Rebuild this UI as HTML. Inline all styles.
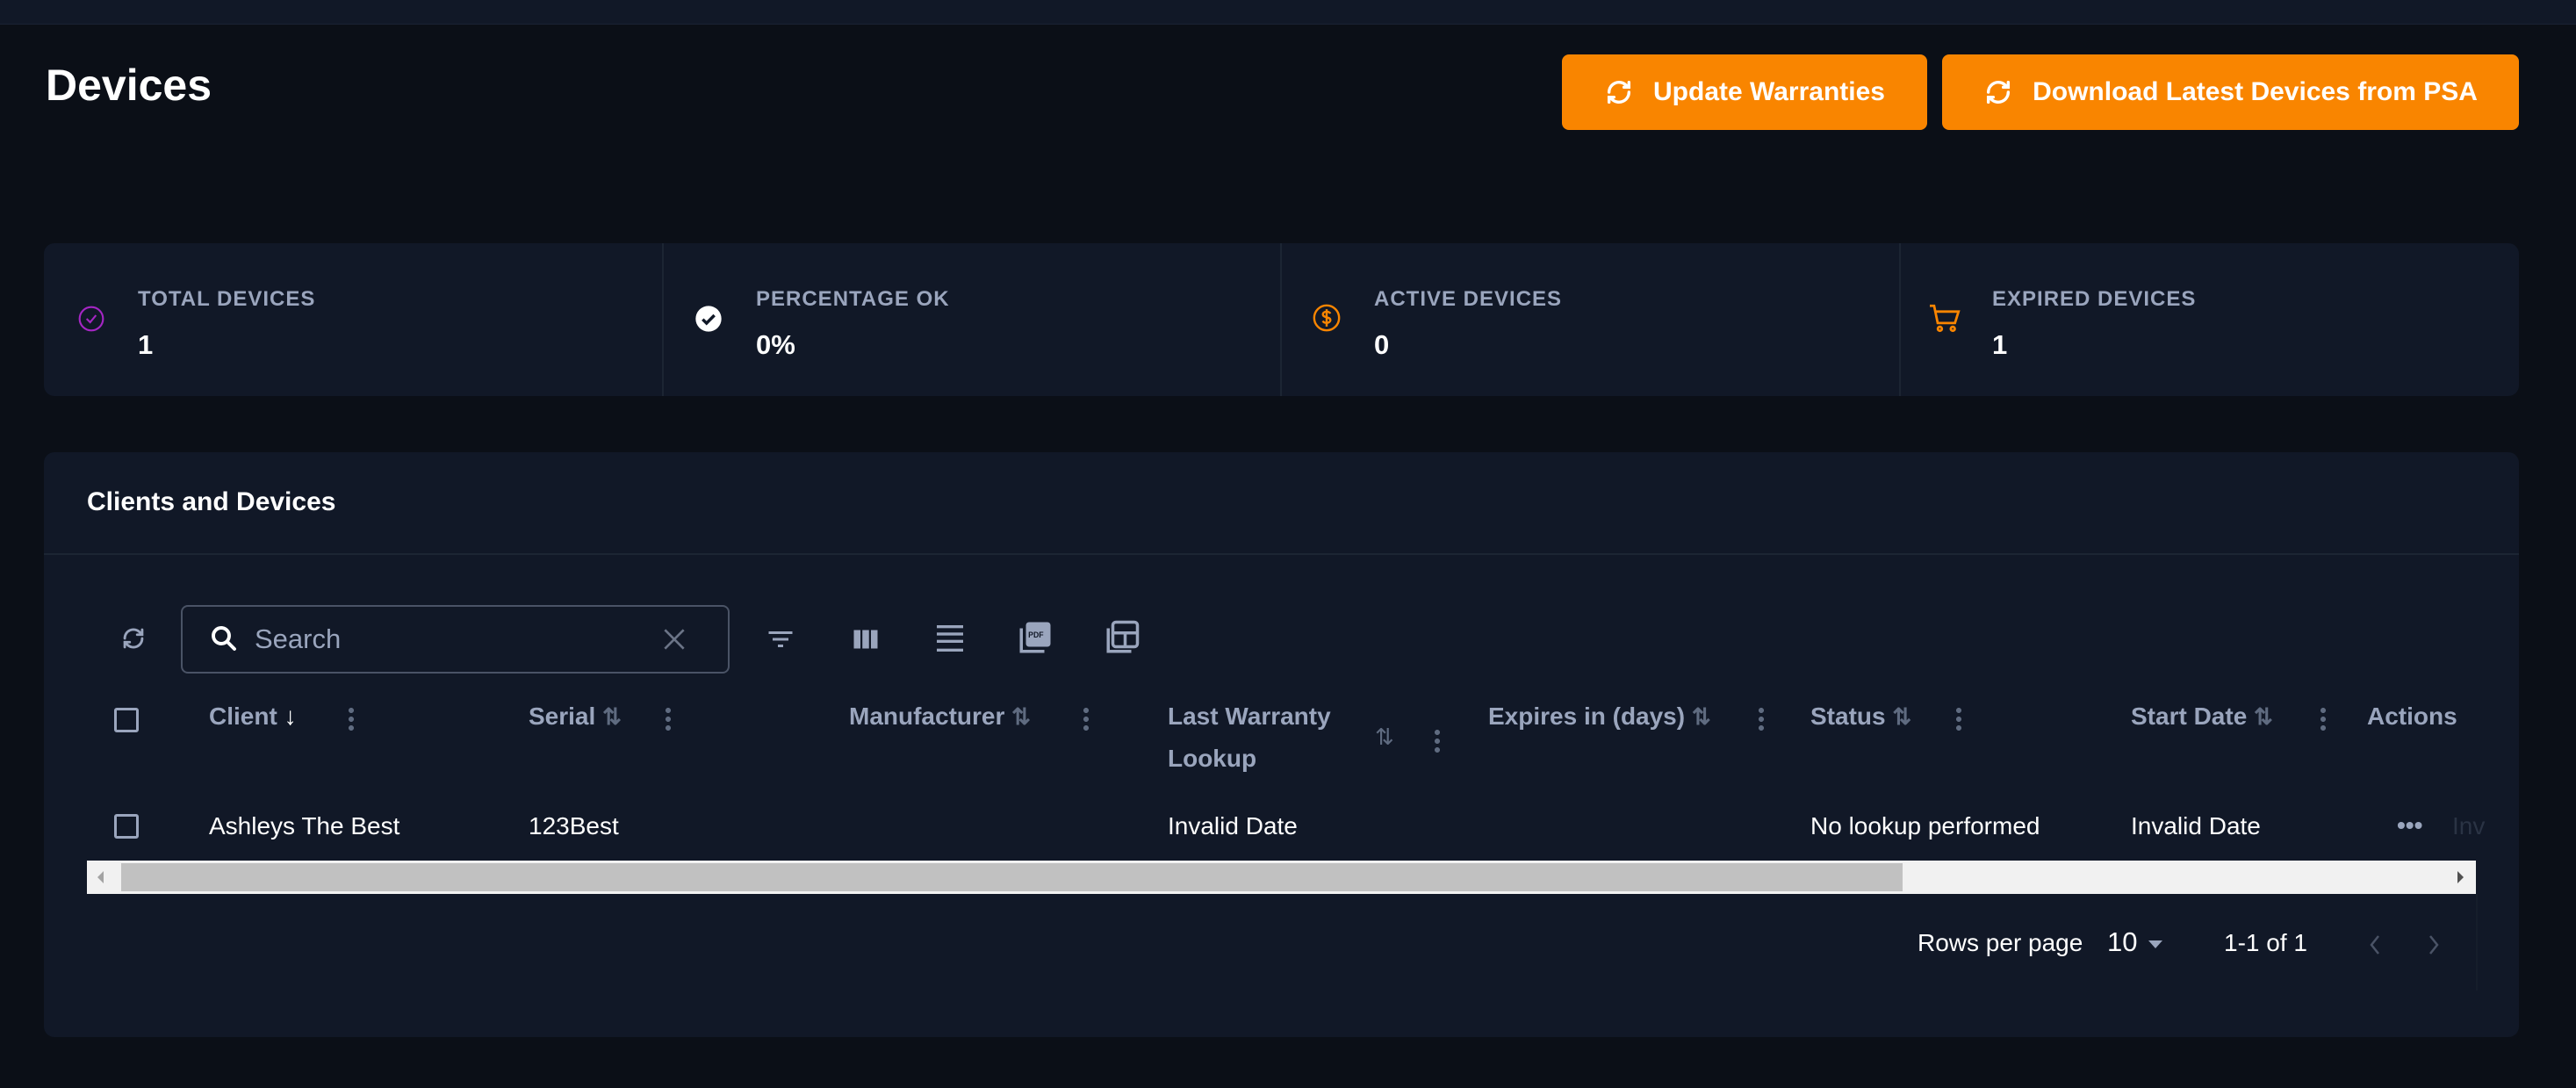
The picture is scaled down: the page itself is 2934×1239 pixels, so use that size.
<!DOCTYPE html>
<html><head><meta charset="utf-8"><style>
*{margin:0;padding:0;box-sizing:border-box}
body{width:2934px;height:1239px;background:#0b0f17;font-family:"Liberation Sans",sans-serif;position:relative;overflow:hidden;color:#fff}
.a{position:absolute;white-space:nowrap}
.top{left:0;top:0;width:2934px;height:28px;background:#111827;border-bottom:1px solid #1a2233}
.btn{background:#f98500;border-radius:8px;height:86px;top:62px;font-weight:bold;font-size:30px;display:flex;align-items:center;justify-content:center;gap:22px;color:#fff}
.card{background:#111827;border-radius:12px}
.lbl{font-size:24px;color:#9aa5bd;letter-spacing:1px;font-weight:bold}
.val{font-size:31px;font-weight:bold;color:#fff}
.div{width:2px;background:#1c2533;top:277px;height:174px}
.th{font-size:28px;font-weight:bold;color:#9aa5bd;top:800px}
.td{font-size:28px;color:#fff;top:925px}
.sort{color:#5f6b80;font-size:26px}
.dots{width:6px;height:30px;background:radial-gradient(circle,#5f6b80 2.8px,transparent 3.2px) 0 0/6px 10px repeat-y}
.cb{width:28px;height:28px;border:3px solid #9aa5bd;border-radius:3px}
</style></head><body>
<div class="a top"></div>
<div class="a" style="left:52px;top:68px;font-size:50px;font-weight:bold">Devices</div>
<div class="a btn" style="left:1779px;width:416px"><svg width="34" height="34" viewBox="0 0 24 24" fill="none" stroke="#fff" stroke-width="2.4" stroke-linecap="round"><path d="M4 12a8 8 0 0 1 13.7-5.6L20 8M20 4v4h-4M20 12a8 8 0 0 1-13.7 5.6L4 16M4 20v-4h4"/></svg>Update Warranties</div>
<div class="a btn" style="left:2212px;width:657px"><svg width="34" height="34" viewBox="0 0 24 24" fill="none" stroke="#fff" stroke-width="2.4" stroke-linecap="round"><path d="M4 12a8 8 0 0 1 13.7-5.6L20 8M20 4v4h-4M20 12a8 8 0 0 1-13.7 5.6L4 16M4 20v-4h4"/></svg>Download Latest Devices from PSA</div>

<div class="a card" style="left:50px;top:277px;width:2819px;height:174px"></div>
<div class="a div" style="left:754px"></div><div class="a div" style="left:1458px"></div><div class="a div" style="left:2163px"></div>
<svg class="a" style="left:88px;top:347px" width="32" height="32" viewBox="0 0 24 24" fill="none" stroke="#a526c4" stroke-width="1.6"><circle cx="12" cy="12" r="10"/><path d="M8 12l3 3 5-6"/></svg>
<div class="a lbl" style="left:157px;top:327px">TOTAL DEVICES</div><div class="a val" style="left:157px;top:375px">1</div>
<svg class="a" style="left:791px;top:347px" width="32" height="32" viewBox="0 0 24 24"><circle cx="12" cy="12" r="11" fill="#fff"/><path d="M7 12.5l3.3 3.3L17 9" stroke="#111827" stroke-width="2.6" fill="none"/></svg>
<div class="a lbl" style="left:861px;top:327px">PERCENTAGE OK</div><div class="a val" style="left:861px;top:375px">0%</div>
<svg class="a" style="left:1494px;top:345px" width="34" height="34" viewBox="0 0 24 24" fill="none" stroke="#f98500" stroke-width="1.7"><circle cx="12" cy="12" r="10"/><path d="M15 8.5c-.5-1-1.6-1.5-3-1.5-1.8 0-3 .9-3 2.2 0 3 6 1.6 6 4.6 0 1.3-1.3 2.2-3 2.2-1.5 0-2.6-.6-3.1-1.6M12 5v14"/></svg>
<div class="a lbl" style="left:1565px;top:327px">ACTIVE DEVICES</div><div class="a val" style="left:1565px;top:375px">0</div>
<svg class="a" style="left:2196px;top:345px" width="40" height="36" viewBox="0 0 24 22" fill="none" stroke="#f98500" stroke-width="1.7"><path d="M1 2h3l2.5 12h12L21 6H5"/><circle cx="8" cy="18" r="1.4"/><circle cx="17" cy="18" r="1.4"/></svg>
<div class="a lbl" style="left:2269px;top:327px">EXPIRED DEVICES</div><div class="a val" style="left:2269px;top:375px">1</div>

<div class="a card" style="left:50px;top:515px;width:2819px;height:666px"></div>
<div class="a" style="left:99px;top:555px;font-size:30px;font-weight:bold">Clients and Devices</div>
<div class="a" style="left:50px;top:630px;width:2819px;height:2px;background:#1c2533"></div>

<svg class="a" style="left:135px;top:710px" width="34" height="34" viewBox="0 0 24 24" fill="none" stroke="#9aa5bd" stroke-width="2" stroke-linecap="round"><path d="M5 12a7 7 0 0 1 12-5l2 2M19 5v4h-4M19 12a7 7 0 0 1-12 5l-2-2M5 19v-4h4"/></svg>
<div class="a" style="left:206px;top:689px;width:625px;height:78px;border:2px solid #4a5366;border-radius:8px"></div>
<svg class="a" style="left:237px;top:709px" width="36" height="36" viewBox="0 0 24 24" fill="none" stroke="#fff" stroke-width="2.6" stroke-linecap="round"><circle cx="10" cy="10" r="6"/><path d="M14.5 14.5L20 20"/></svg>
<div class="a" style="left:290px;top:710px;font-size:31px;color:#9aa5bd">Search</div>
<svg class="a" style="left:752px;top:712px" width="32" height="32" viewBox="0 0 24 24" stroke="#6b7487" stroke-width="2"><path d="M4 4l16 16M20 4L4 20"/></svg>
<svg class="a" style="left:870px;top:710px" width="38" height="36" viewBox="0 0 24 24" fill="#9aa5bd"><rect x="3" y="6" width="18" height="2"/><rect x="6" y="11" width="12" height="2"/><rect x="10" y="16" width="4" height="2"/></svg>
<svg class="a" style="left:966px;top:710px" width="40" height="36" viewBox="0 0 24 24" fill="#9aa5bd"><rect x="3" y="5" width="5" height="14"/><rect x="9.5" y="5" width="5" height="14"/><rect x="16" y="5" width="5" height="14"/></svg>
<svg class="a" style="left:1062px;top:706px" width="40" height="42" viewBox="0 0 24 24" fill="#9aa5bd"><rect x="3" y="3" width="18" height="2"/><rect x="3" y="8" width="18" height="2"/><rect x="3" y="13" width="18" height="2"/><rect x="3" y="19" width="18" height="2"/></svg>
<svg class="a" style="left:1158px;top:704px" width="42" height="44" viewBox="0 0 24 24"><rect x="6" y="2" width="16" height="16" rx="2" fill="#9aa5bd"/><path d="M3 6v15h15" stroke="#9aa5bd" stroke-width="2" fill="none"/><text x="7.5" y="12" font-size="5" font-family="Liberation Sans" font-weight="bold" fill="#111827">PDF</text></svg>
<svg class="a" style="left:1257px;top:704px" width="42" height="44" viewBox="0 0 24 24" fill="none" stroke="#9aa5bd" stroke-width="2"><rect x="6" y="2" width="16" height="16" rx="2"/><path d="M6 9h16M14 9v9M3 6v15h15"/></svg>

<div class="a cb" style="left:130px;top:806px"></div>
<div class="a th" style="left:238px;color:#9aa5bd">Client <span style="color:#fff">&#8595;</span></div><div class="a dots" style="left:397px;top:804px"></div>
<div class="a th" style="left:602px">Serial <span class="sort">⇅</span></div><div class="a dots" style="left:758px;top:804px"></div>
<div class="a th" style="left:967px">Manufacturer <span class="sort">⇅</span></div><div class="a dots" style="left:1234px;top:804px"></div>
<div class="a th" style="left:1330px;line-height:48px;top:792px">Last Warranty<br>Lookup</div><div class="a sort" style="left:1566px;top:824px">⇅</div><div class="a dots" style="left:1634px;top:829px"></div>
<div class="a th" style="left:1695px">Expires in (days) <span class="sort">⇅</span></div><div class="a dots" style="left:2003px;top:804px"></div>
<div class="a th" style="left:2062px">Status <span class="sort">⇅</span></div><div class="a dots" style="left:2228px;top:804px"></div>
<div class="a th" style="left:2427px">Start Date <span class="sort">⇅</span></div><div class="a dots" style="left:2643px;top:804px"></div>
<div class="a th" style="left:2696px">Actions</div>

<div class="a cb" style="left:130px;top:927px"></div>
<div class="a td" style="left:238px">Ashleys The Best</div>
<div class="a td" style="left:602px">123Best</div>
<div class="a td" style="left:1330px">Invalid Date</div>
<div class="a td" style="left:2062px">No lookup performed</div>
<div class="a td" style="left:2427px">Invalid Date</div>
<div class="a td" style="left:2730px;color:#9aa5bd;font-weight:bold;top:924px">•••</div>
<div class="a td" style="left:2793px;color:#2a3344">Inv</div>

<div class="a" style="left:99px;top:980px;width:2721px;height:38px;background:#f1f1f1"></div>
<div class="a" style="left:138px;top:983px;width:2029px;height:32px;background:#c1c1c1"></div>
<div class="a" style="left:111px;top:992px;width:0;height:0;border:7px solid transparent;border-right-color:#a3a3a3;border-left:0"></div>
<div class="a" style="left:2799px;top:992px;width:0;height:0;border:7px solid transparent;border-left-color:#505050;border-right:0"></div>
<div class="a" style="left:2820px;top:1018px;width:2px;height:110px;background:#161e2b"></div>

<div class="a" style="left:2184px;top:1058px;font-size:28px">Rows per page</div>
<div class="a" style="left:2400px;top:1055px;font-size:31px">10</div>
<div class="a" style="left:2447px;top:1071px;border:8px solid transparent;border-top:9px solid #9aa5bd;border-bottom:0"></div>
<div class="a" style="left:2533px;top:1058px;font-size:28px">1-1 of 1</div>
<svg class="a" style="left:2693px;top:1060px" width="24" height="32" viewBox="0 0 24 32" fill="none" stroke="#4a5366" stroke-width="2.5"><path d="M16 6L8 16l8 10"/></svg>
<svg class="a" style="left:2760px;top:1060px" width="24" height="32" viewBox="0 0 24 32" fill="none" stroke="#4a5366" stroke-width="2.5"><path d="M8 6l8 10-8 10"/></svg>
</body></html>
